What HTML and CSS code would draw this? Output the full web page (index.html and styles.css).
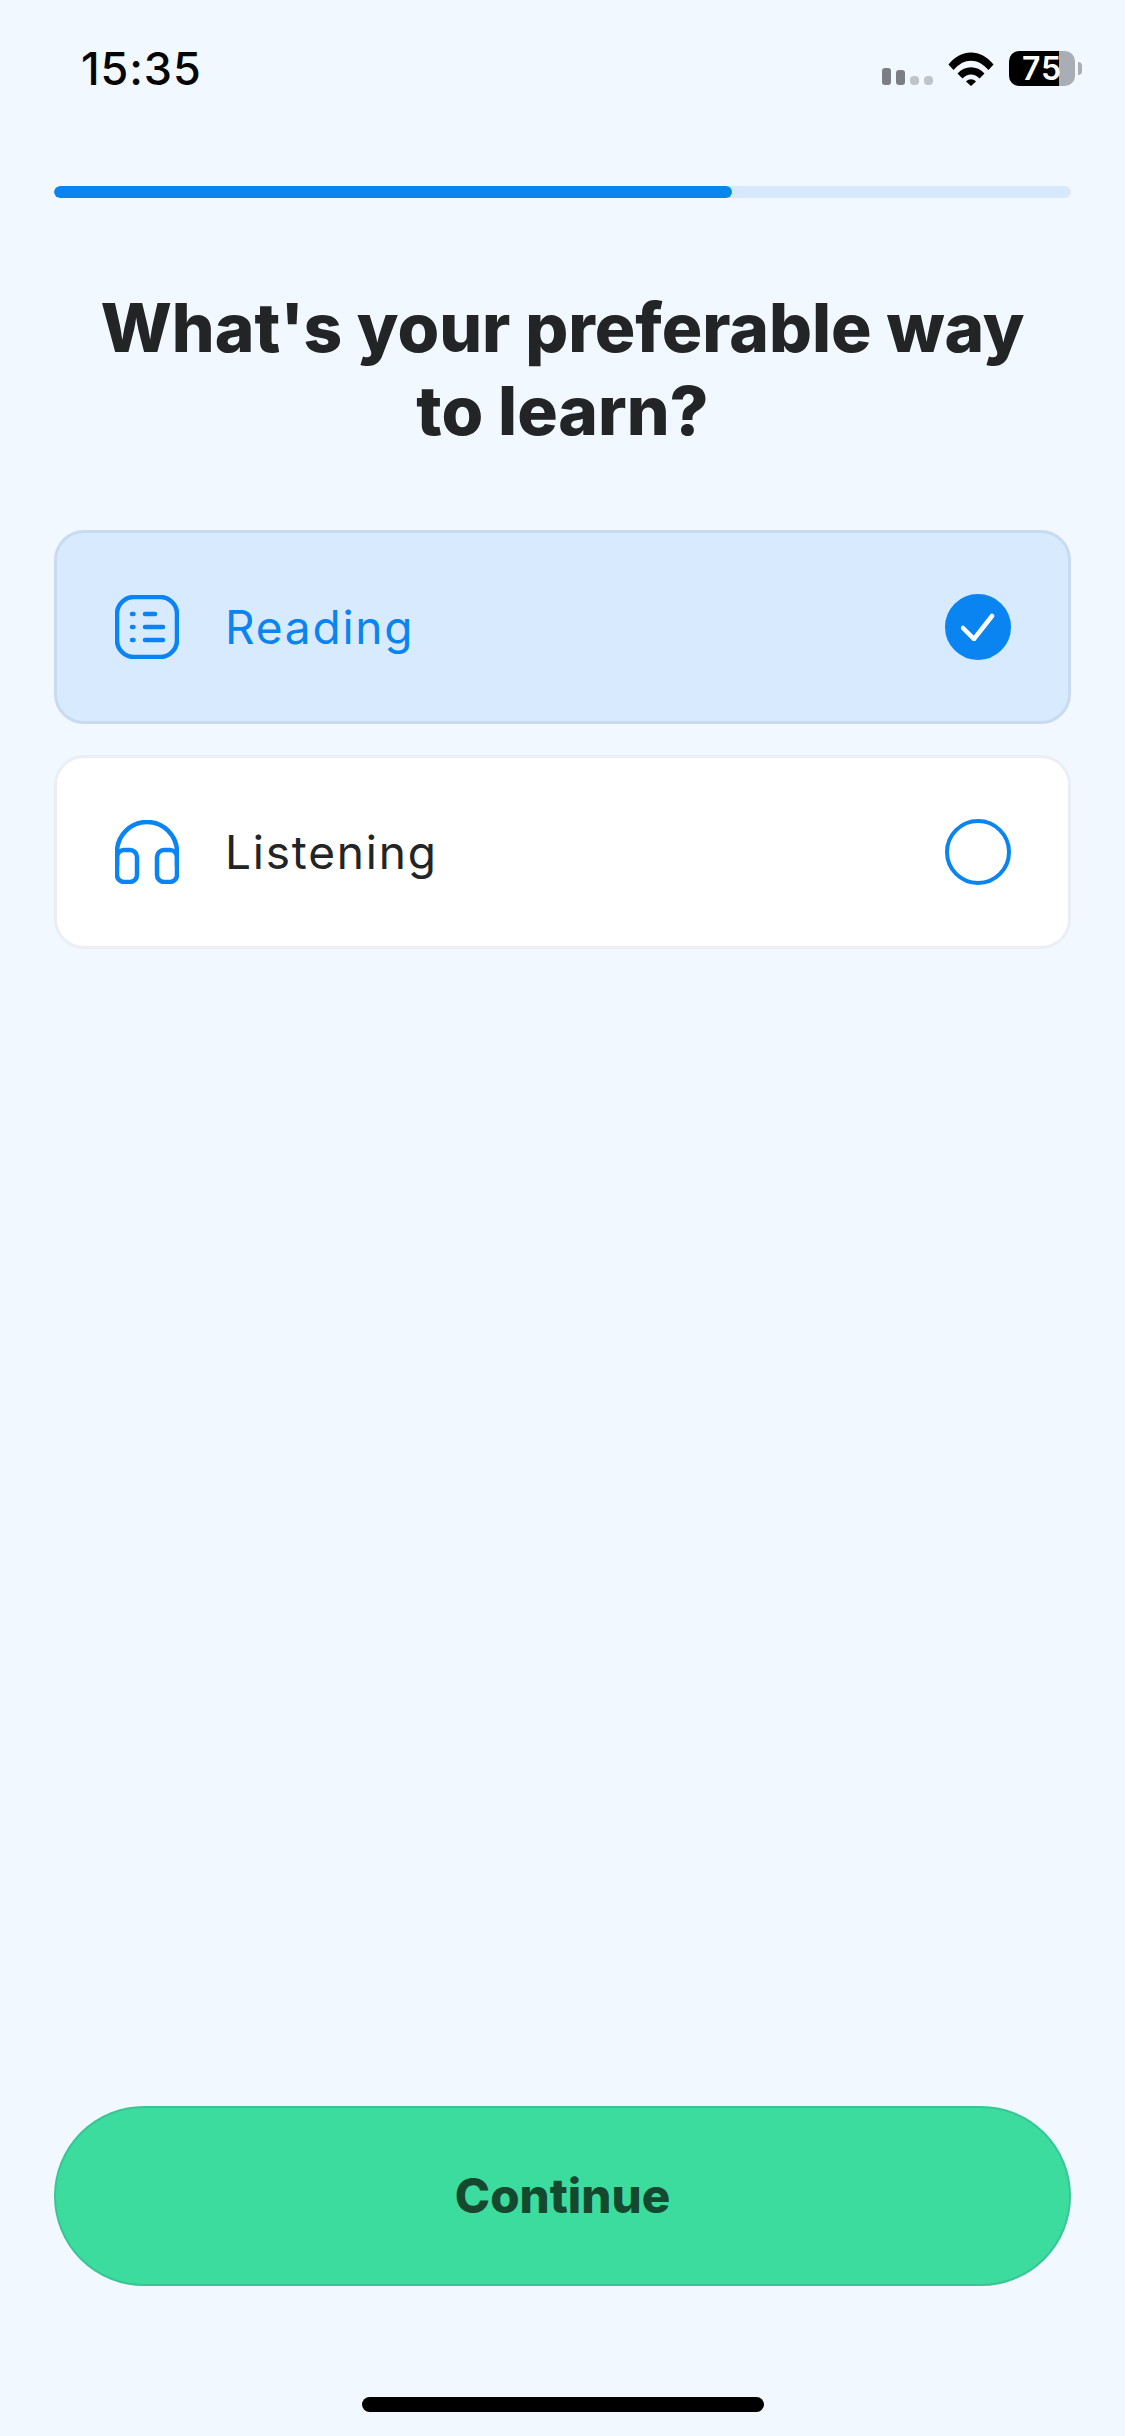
FILE: index.html
```html
<!DOCTYPE html>
<html lang="en">
<head>
<meta charset="utf-8">
<title>Learning preference</title>
<link rel="stylesheet" href="styles.css">
</head>
<body>
<div class="screen">
  <header class="status">
    <span class="time">15:35</span>
    <div class="indicators">
      <div class="signal"><i class="bar on tall"></i><i class="bar on"></i><i class="bar dot"></i><i class="bar dot"></i></div>
      <svg class="wifi" viewBox="0 0 46 34" aria-hidden="true">
        <path d="M0.5 12.5 C13 -3.5 33 -3.5 45.5 12.5 L40.5 18 C30 5.5 16 5.5 5.5 18 Z" fill="#000"/>
        <path d="M9.5 21.5 C17 13 29 13 36.5 21.5 L31.5 26.5 C26.5 21 19.5 21 14.5 26.5 Z" fill="#000"/>
        <path d="M18 29.5 C21 26.5 25 26.5 28 29.5 L23 34 Z" fill="#000"/>
      </svg>
      <div class="battery">
        <div class="battery-body"><span class="battery-level">75</span></div>
        <i class="battery-cap"></i>
      </div>
    </div>
  </header>

  <div class="progress"><div class="progress-fill"></div></div>

  <h1 class="title">What's your preferable way<br>to learn?</h1>

  <div class="options">
    <div class="option selected">
      <svg class="option-icon" viewBox="0 0 64 64" fill="none" stroke="#0a84f5" stroke-width="4.500" stroke-linecap="round" aria-hidden="true">
        <rect x="2" y="2" width="60" height="60" rx="17"/>
        <path d="M17 19h1.500M30 19h10M17 32h1.500M30 32h18M17 45h1.500M30 45h18"/>
      </svg>
      <span class="option-label">Reading</span>
      <span class="radio checked">
        <svg class="check" viewBox="0 0 34 28" fill="none" stroke="#fff" stroke-width="4.500" stroke-linecap="round" aria-hidden="true">
          <path d="M2 15l11 11L31 3" />
        </svg>
      </span>
    </div>
    <div class="option">
      <svg class="option-icon" viewBox="0 0 64 64" fill="none" stroke="#0a84f5" stroke-width="4.500" stroke-linejoin="round" aria-hidden="true">
        <path d="M2 46V32a30 30 0 0 1 60 0v14"/>
        <rect x="2" y="30" width="20" height="32" rx="7"/>
        <rect x="42" y="30" width="20" height="32" rx="7"/>
      </svg>
      <span class="option-label">Listening</span>
      <span class="radio"></span>
    </div>
  </div>

  <div class="footer">
    <button class="continue" type="button">Continue</button>
    <div class="home-indicator"></div>
  </div>
</div>
</body>
</html>
```
FILE: styles.css
```css
* { box-sizing: border-box; }
html, body { margin: 0; padding: 0; }
body {
  background: #f2f8ff;
  font-family: Inter, "Noto Sans", sans-serif;
  color: #222426;
}
.screen {
  width: 1125px;
  height: 2436px;
  display: flex;
  flex-direction: column;
  padding: 0 54px;
  overflow: hidden;
}
.status {
  height: 186px;
  flex: none;
  display: flex;
  justify-content: space-between;
  align-items: flex-start;
  padding: 42px 0 0 27px;
}
.time {
  font-size: 45px;
  line-height: 54px;
  font-weight: 500;
  letter-spacing: 0.9px;
  color: #050505;
}
.indicators {
  display: flex;
  align-items: flex-start;
  margin-right: -11px;
  padding-top: 10px;
}
.signal {
  display: flex;
  align-items: flex-end;
  gap: 5px;
  height: 17px;
  margin: 16px 15px 0 0;
}
.bar { display: block; width: 9px; border-radius: 3px; }
.bar.on { height: 15px; background: #7b7f85; }
.bar.on.tall { height: 17px; }
.bar.dot { height: 9px; background: #bfc3cc; border-radius: 4px; }
.wifi { width: 46px; height: 34px; display: block; margin-right: 15px; }
.battery { display: flex; align-items: center; margin-top: -1px; }
.battery-body {
  width: 66px;
  height: 35px;
  border-radius: 10px;
  background: linear-gradient(to right, #000 0, #000 50px, #a9adb5 50px);
  text-align: center;
}
.battery-level {
  display: block;
  font-size: 32px;
  line-height: 35px;
  font-weight: 600;
  color: #fff;
  letter-spacing: 1px;
}
.battery-cap {
  display: block;
  width: 4px;
  height: 13px;
  margin-left: 3px;
  background: #a9adb5;
  border-radius: 0 8px 8px 0;
}
.progress {
  height: 12px;
  flex: none;
  border-radius: 6px;
  background: #d9e9fd;
  overflow: hidden;
}
.progress-fill {
  width: 66.7%;
  height: 100%;
  border-radius: 6px;
  background: #0a84f0;
}
.title {
  margin: 88px 0 0;
  font-size: 67.5px;
  line-height: 83px;
  font-weight: 800;
  text-align: center;
  color: #222426;
}
.options {
  margin-top: 78px;
  display: flex;
  flex-direction: column;
  gap: 31px;
}
.option {
  height: 194px;
  display: flex;
  align-items: center;
  padding: 0 57px 0 58px;
  border-radius: 30px;
  background: #fff;
  border: 3px solid #ebeff5;
}
.option.selected {
  background: #d8eafd;
  border-color: #c9dbf0;
}
.option-icon { width: 64px; height: 64px; flex: none; display: block; }
.option-label {
  margin-left: 46px;
  flex: 1;
  font-size: 46px;
  line-height: 56px;
  font-weight: 400;
  letter-spacing: 1.8px;
}
.selected .option-label { color: #0a84f0; }
.radio {
  width: 66px;
  height: 66px;
  flex: none;
  border-radius: 50%;
  border: 4px solid #0a84f0;
  display: flex;
  align-items: center;
  justify-content: center;
}
.radio.checked { background: #0a84f0; }
.check { width: 34px; height: 28px; display: block; }
.footer {
  margin-top: auto;
  display: flex;
  flex-direction: column;
  align-items: center;
}
.continue {
  width: 100%;
  height: 180px;
  border-radius: 90px;
  border: 2px solid #38c694;
  background: #3cdc9e;
  color: #14492f;
  font-family: Inter, sans-serif;
  font-size: 47.5px;
  font-weight: 800;
  padding: 0 0 2px;
}
.home-indicator {
  width: 402px;
  height: 15px;
  margin: 111px 0 24px;
  border-radius: 8px;
  background: #000;
}
```
